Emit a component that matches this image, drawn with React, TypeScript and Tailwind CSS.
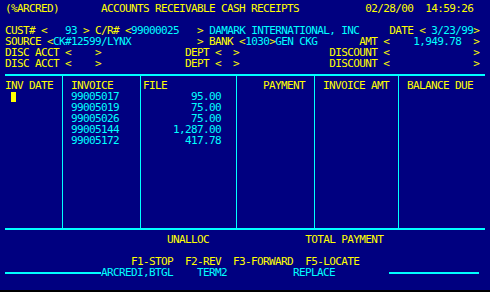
import React from "react";

const Y = "text-[#ffff00]";
const C = "text-[#00ffff]";

function Line({ children }: { children?: React.ReactNode }) {
  return <div className="h-[11px] leading-[11px] whitespace-pre">{children}</div>;
}

const invoices = ["99005017", "99005019", "99005026", "99005144", "99005172"];
const files = ["95.00", "75.00", "75.00", "1,287.00", "417.78"];

export default function App() {
  return (
    <div className="w-[490px] h-[292px] bg-[#000080] border-b-2 border-black overflow-hidden font-['DejaVu_Sans_Mono',monospace] text-[11px] tracking-[-0.62px] pl-[5px] pt-[3px]">
      <div className="w-[480px]">
        <Line>
          <span className={Y}>{"(%ARCRED)       ACCOUNTS RECEIVABLE CASH RECEIPTS           02/28/00  14:59:26"}</span>
        </Line>
        <Line />
        <Line>
          <span className={Y}>{"CUST# <   "}</span>
          <span className={C}>93</span>
          <span className={Y}>{" > C/R# <"}</span>
          <span className={C}>99000025</span>
          <span className={Y}>{"   > "}</span>
          <span className={C}>DAMARK INTERNATIONAL, INC</span>
          <span className={Y}>{"     DATE < "}</span>
          <span className={C}>3/23/99</span>
          <span className={Y}>{">"}</span>
        </Line>
        <Line>
          <span className={Y}>{"SOURCE <"}</span>
          <span className={C}>CK#12599/LYNX</span>
          <span className={Y}>{"           > BANK <"}</span>
          <span className={C}>1030</span>
          <span className={Y}>{">"}</span>
          <span className={C}>GEN CKG</span>
          <span className={Y}>{"       AMT <    "}</span>
          <span className={C}>1,949.78</span>
          <span className={Y}>{"  >"}</span>
        </Line>
        <Line>
          <span className={Y}>{"DISC ACCT <    >              DEPT <  >               DISCOUNT <              >"}</span>
        </Line>
        <Line>
          <span className={Y}>{"DISC ACCT <    >              DEPT <  >               DISCOUNT <              >"}</span>
        </Line>

        <div className="mt-[5px] border-y-2 border-[#00ffff] flex h-[156px]">
          <div className="w-[58px] border-r border-[#00ffff] pt-[4px]">
            <Line><span className={Y}>INV DATE</span></Line>
            <div className="h-[11px] pt-[1px] pl-[6px]">
              <div className="w-[5px] h-[10px] bg-[#ffff00]" />
            </div>
          </div>
          <div className="w-[78px] border-r border-[#00ffff] pt-[4px] pl-[8px]">
            <Line><span className={Y}>INVOICE</span></Line>
            {invoices.map((n) => (
              <Line key={n}><span className={C}>{n}</span></Line>
            ))}
          </div>
          <div className="w-[96px] border-r border-[#00ffff] pt-[4px] pl-[2px]">
            <div className="w-[78px]">
              <Line><span className={Y}>FILE</span></Line>
              {files.map((f, i) => (
                <div key={i} className={`h-[11px] leading-[11px] whitespace-pre text-right ${C}`}>{f}</div>
              ))}
            </div>
          </div>
          <div className="w-[78px] border-r border-[#00ffff] pt-[4px] pl-[26px]">
            <Line><span className={Y}>PAYMENT</span></Line>
          </div>
          <div className="w-[84px] border-r border-[#00ffff] pt-[4px] pl-[8px]">
            <Line><span className={Y}>INVOICE AMT</span></Line>
          </div>
          <div className="flex-1 pt-[4px] pl-[8px]">
            <Line><span className={Y}>BALANCE DUE</span></Line>
          </div>
        </div>

        <div className="mt-[4px]">
          <Line>
            <span className={Y}>{"                           UNALLOC                TOTAL PAYMENT"}</span>
          </Line>
          <Line />
          <Line>
            <span className={Y}>{"                     F1-STOP  F2-REV  F3-FORWARD  F5-LOCATE"}</span>
          </Line>
          <div className="h-[11px] flex items-center">
            <div className="w-[96px] h-[2px] bg-[#00ffff]" />
            <div className={`w-[288px] h-[11px] leading-[11px] whitespace-pre ${C}`}>{"ARCREDI,BTGL    TERM2           REPLACE"}</div>
            <div className="w-[90px] h-[2px] bg-[#00ffff]" />
          </div>
        </div>
      </div>
    </div>
  );
}
